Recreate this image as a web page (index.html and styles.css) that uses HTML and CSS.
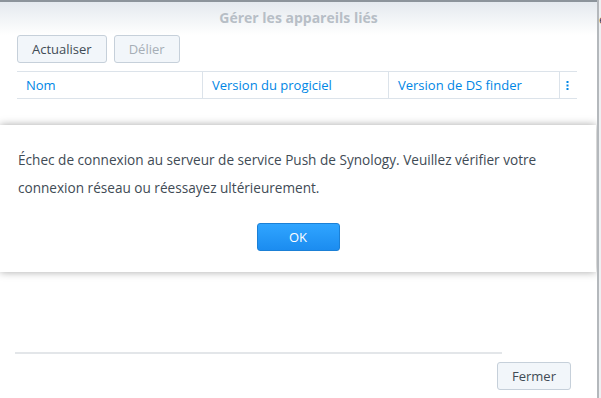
FILE: index.html
```html
<!DOCTYPE html>
<html lang="fr">
<head>
    <meta charset="UTF-8">
    <title>Gérer les appareils liés</title>
    <link rel="stylesheet" href="styles.css">
</head>
<body>
    <div class="desk">
        <div class="window">
            <div class="win-top"></div>
            <div class="win-header">Gérer les appareils liés</div>

            <div class="toolbar">
                <button type="button" class="btn">Actualiser</button>
                <button type="button" class="btn" disabled>Délier</button>
            </div>

            <div class="grid-head">
                <div class="col col-name">Nom</div>
                <div class="col col-fw">Version du progiciel</div>
                <div class="col col-ds">Version de DS finder</div>
                <div class="col col-menu">
                    <svg width="3" height="9" viewBox="0 0 3 9">
                        <rect x="0.5" y="0" width="2" height="2" fill="#0086e5"/>
                        <rect x="0.5" y="3.5" width="2" height="2" fill="#0086e5"/>
                        <rect x="0.5" y="7" width="2" height="2" fill="#0086e5"/>
                    </svg>
                </div>
            </div>

            <div class="grid-body"></div>

            <div class="footer">
                <button type="button" class="btn btn-close">Fermer</button>
            </div>

            <!-- message box over the window -->
            <div class="msgbox">
                <p class="msg">Échec de connexion au serveur de service Push de Synology. Veuillez vérifier votre connexion réseau ou réessayez ultérieurement.</p>
                <div class="msg-actions">
                    <button type="button" class="btn-ok">OK</button>
                </div>
            </div>
        </div>
        <div class="behind">
            <span class="behind-text">e</span>
        </div>
    </div>
</body>
</html>
```

FILE: styles.css
```css
body {
    margin: 0;
    font-family: "Open Sans", "DejaVu Sans", sans-serif;
    font-size: 13px;
    color: #414b55;
    background: #fff;
}
.desk {
    display: flex;
    width: 601px;
    height: 398px;
    overflow: hidden;
}
.window {
    position: relative;
    flex: none;
    width: 597px;
    height: 398px;
    background: #fff;
    display: flex;
    flex-direction: column;
}
.win-top {
    height: 2px;
    background: #8c949b;
}
.win-header {
    height: 33px;
    line-height: 31px;
    text-align: center;
    font-size: 14px;
    font-weight: bold;
    color: #b7bec6;
    background: linear-gradient(#e4e9ee, #ffffff);
}
.toolbar {
    display: flex;
    gap: 7px;
    padding: 0 17px;
    height: 36px;
}
.btn {
    font-family: inherit;
    font-size: 13px;
    color: #414b55;
    background: #f2f6fa;
    border: 1px solid #c6d0da;
    border-radius: 3px;
    height: 28px;
    padding: 0 14px;
    cursor: pointer;
}
.btn:disabled {
    color: #a6aeb6;
    cursor: default;
}
.grid-head {
    display: flex;
    margin: 0 20px 0 17px;
    border-top: 1px solid #dce3ea;
    border-bottom: 1px solid #dce3ea;
    height: 26px;
}
.col {
    color: #0086e5;
    line-height: 26px;
    padding-left: 9px;
    border-right: 1px solid #dce3ea;
}
.col-name { width: 176px; }
.col-fw { width: 176px; }
.col-ds { width: 161px; }
.col-menu {
    border-right: none;
    padding-left: 6px;
    display: flex;
    align-items: center;
}
.grid-body {
    flex: 1;
    margin: 0 95px 0 15px;
    border-bottom: 2px solid #e3e6e9;
}
.footer {
    height: 44px;
    display: flex;
    justify-content: flex-end;
    align-items: center;
    padding-right: 26px;
}
.btn-close {
    padding: 0 14px;
}
.msgbox {
    position: absolute;
    left: 0;
    top: 125px;
    width: 596px;
    height: 147px;
    background: #fff;
    box-shadow: 0 0 8px rgba(0, 0, 0, 0.35);
    box-sizing: border-box;
    padding: 21px 18px 0 18px;
}
.msg {
    margin: 0;
    font-size: 13.6px;
    line-height: 28px;
    width: 560px;
}
.msg-actions {
    display: flex;
    justify-content: center;
    margin-top: 21px;
}
.btn-ok {
    font-family: inherit;
    font-size: 13px;
    color: #fff;
    width: 83px;
    height: 28px;
    border: 1px solid #1b80d6;
    border-radius: 3px;
    background: linear-gradient(#30a5ff, #1b8cf0);
    cursor: pointer;
}
.behind {
    flex: none;
    width: 2px;
    background: #eef0f2;
    border-left: 2px solid #b4b8bc;
    position: relative;
}
.behind-text {
    position: absolute;
    left: 0;
    top: 10px;
    font-size: 13px;
    color: #414b55;
}
```
